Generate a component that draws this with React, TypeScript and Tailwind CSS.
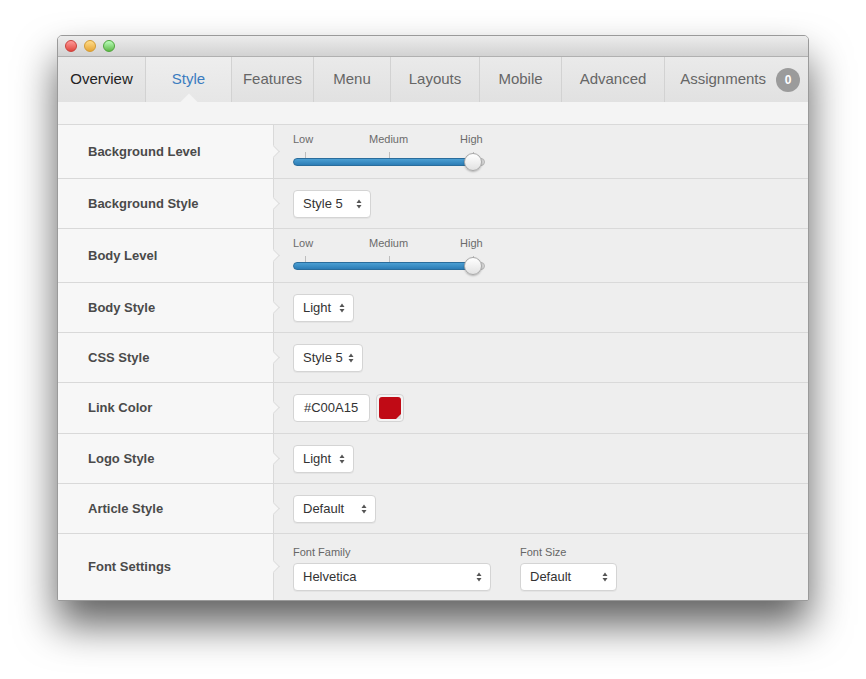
import React from "react";

const font = { fontFamily: '"Liberation Sans", Arial, sans-serif' };

function Arrows() {
  return (
    <svg width="6" height="10" viewBox="0 0 6 10" className="shrink-0">
      <path d="M3 0.5 L5.5 4 L0.5 4 Z" fill="#555" />
      <path d="M3 9.5 L5.5 6 L0.5 6 Z" fill="#555" />
    </svg>
  );
}

function Select({ value, w }: { value: string; w: string }) {
  return (
    <div
      className={`${w} h-[28px] bg-white border border-[#d4d4d4] rounded-[4px] flex items-center justify-between pl-[9px] pr-[8px] text-[13px] text-[#333] shadow-[0_1px_0_rgba(0,0,0,0.04)]`}
    >
      <span>{value}</span>
      <Arrows />
    </div>
  );
}

function Slider() {
  return (
    <div className="w-[200px] pt-[3px]">
      <div className="relative h-[17px] text-[11px] text-[#6b6b6b] leading-none">
        <span className="absolute left-0 top-0">Low</span>
        <span className="absolute left-[76px] top-0">Medium</span>
        <span className="absolute left-[167px] top-0">High</span>
      </div>
      <div className="relative h-[22px]">
        <div className="absolute left-[12px] top-[1px] w-px h-[9px] bg-[#bdbdbd]" />
        <div className="absolute left-[96px] top-[1px] w-px h-[9px] bg-[#bdbdbd]" />
        <div className="absolute left-[180px] top-[1px] w-px h-[9px] bg-[#bdbdbd]" />
        <div className="absolute left-[184px] top-[7px] w-[8px] h-[8px] rounded-full bg-[#d8d8d8] border border-[#b5b5b5]" />
        <div className="absolute left-0 top-[7px] w-[186px] h-[8px] rounded-full bg-gradient-to-b from-[#4b9fd3] to-[#2c7db6] border border-[#2a6d9c]" />
        <div className="absolute left-[171px] top-[2px] w-[18px] h-[18px] rounded-full bg-gradient-to-b from-[#ffffff] to-[#e2e2e2] border border-[#a8a8a8] shadow-[0_1px_2px_rgba(0,0,0,0.25)]" />
      </div>
    </div>
  );
}

function Row({
  label,
  h,
  children,
  last,
}: {
  label: string;
  h: string;
  children: React.ReactNode;
  last?: boolean;
}) {
  return (
    <div className={`flex ${h} ${last ? "" : "border-b border-[#d9d9d9]"}`}>
      <div className="w-[215px] shrink-0 bg-[#f7f7f7] flex items-center pl-[30px] text-[13px] font-bold text-[#4a4a4a]">
        {label}
      </div>
      <div className="relative flex-1 bg-[#eeeeee] border-l border-[#d9d9d9] flex items-center pl-[19px]">
        <div className="absolute left-[-5px] top-1/2 -mt-[5px] w-[9px] h-[9px] rotate-45 bg-[#f7f7f7] border-t border-r border-[#dcdcdc]" />
        {children}
      </div>
    </div>
  );
}

const tabs = [
  { name: "Overview", w: "w-[88px]", color: "text-[#222]" },
  { name: "Style", w: "w-[86px]", color: "text-[#3b7cbf]", active: true },
  { name: "Features", w: "w-[82px]", color: "text-[#666]" },
  { name: "Menu", w: "w-[77px]", color: "text-[#666]" },
  { name: "Layouts", w: "w-[89px]", color: "text-[#666]" },
  { name: "Mobile", w: "w-[82px]", color: "text-[#666]" },
  { name: "Advanced", w: "w-[103px]", color: "text-[#666]" },
];

export default function App() {
  return (
    <div className="min-h-screen bg-white pl-[57px] pt-[35px]" style={font}>
      <div className="w-[752px] rounded-t-[5px] rounded-b-[2px] overflow-hidden bg-[#eeeeee] border border-[#9a9a9a] shadow-[0_24px_40px_rgba(0,0,0,0.62)]">
        {/* title bar */}
        <div className="h-[21px] bg-gradient-to-b from-[#ececec] to-[#d2d2d2] border-b border-[#b0b0b0] flex items-center gap-[7px] pl-[7px]">
          <span className="w-[12px] h-[12px] rounded-full bg-gradient-to-b from-[#f99] to-[#e0443e] border border-[#c9403a]" />
          <span className="w-[12px] h-[12px] rounded-full bg-gradient-to-b from-[#fd8] to-[#e6a634] border border-[#d29a33]" />
          <span className="w-[12px] h-[12px] rounded-full bg-gradient-to-b from-[#bfb] to-[#5fb946] border border-[#4ea43c]" />
        </div>
        {/* tabs */}
        <div className="flex h-[45px] bg-gradient-to-b from-[#eaeaea] to-[#e1e1e1] text-[15px]">
          {tabs.map((t) => (
            <div
              key={t.name}
              className={`relative ${t.w} shrink-0 flex items-center justify-center border-r border-[#d2d2d2] ${t.color} ${
                t.active ? "bg-gradient-to-b from-[#eeeeee] to-[#e6e6e6]" : ""
              }`}
            >
              {t.name}
              {t.active && (
                <div className="absolute bottom-[-6px] left-1/2 -ml-[6px] w-[12px] h-[12px] rotate-45 bg-[#f4f4f4]" />
              )}
            </div>
          ))}
          <div className="flex-1 flex items-center justify-end pr-[8px] gap-[10px] text-[#666]">
            <span>Assignments</span>
            <span className="w-[24px] h-[24px] rounded-full bg-[#9b9b9b] text-white text-[12px] font-bold flex items-center justify-center">
              0
            </span>
          </div>
        </div>
        <div className="h-[23px] bg-[#f4f4f4] border-b border-[#d9d9d9]" />
        <Row label="Background Level" h="h-[54px]">
          <Slider />
        </Row>
        <Row label="Background Style" h="h-[50px]">
          <Select value="Style 5" w="w-[78px]" />
        </Row>
        <Row label="Body Level" h="h-[54px]">
          <Slider />
        </Row>
        <Row label="Body Style" h="h-[50px]">
          <Select value="Light" w="w-[61px]" />
        </Row>
        <Row label="CSS Style" h="h-[50px]">
          <Select value="Style 5" w="w-[70px]" />
        </Row>
        <Row label="Link Color" h="h-[51px]">
          <div className="flex items-center gap-[6px]">
            <div className="w-[77px] h-[28px] bg-white border border-[#d4d4d4] rounded-[4px] flex items-center pl-[10px] text-[13px] text-[#333]">
              #C00A15
            </div>
            <div className="relative w-[28px] h-[28px] rounded-[4px] bg-[#f4f4f4] border border-[#d4d4d4] p-[2px]">
              <div className="w-full h-full rounded-[3px] bg-[#c00a15]" />
              <div className="absolute right-[2px] bottom-[2px] w-0 h-0 border-l-[5px] border-l-transparent border-b-[5px] border-b-[#ddd]" />
            </div>
          </div>
        </Row>
        <Row label="Logo Style" h="h-[50px]">
          <Select value="Light" w="w-[61px]" />
        </Row>
        <Row label="Article Style" h="h-[50px]">
          <Select value="Default" w="w-[83px]" />
        </Row>
        <Row label="Font Settings" h="h-[66px]" last>
          <div className="flex gap-[29px] pt-[4px]">
            <div className="flex flex-col gap-[5px]">
              <span className="text-[11px] text-[#666] leading-none">Font Family</span>
              <Select value="Helvetica" w="w-[198px]" />
            </div>
            <div className="flex flex-col gap-[5px]">
              <span className="text-[11px] text-[#666] leading-none">Font Size</span>
              <Select value="Default" w="w-[97px]" />
            </div>
          </div>
        </Row>
      </div>
    </div>
  );
}
